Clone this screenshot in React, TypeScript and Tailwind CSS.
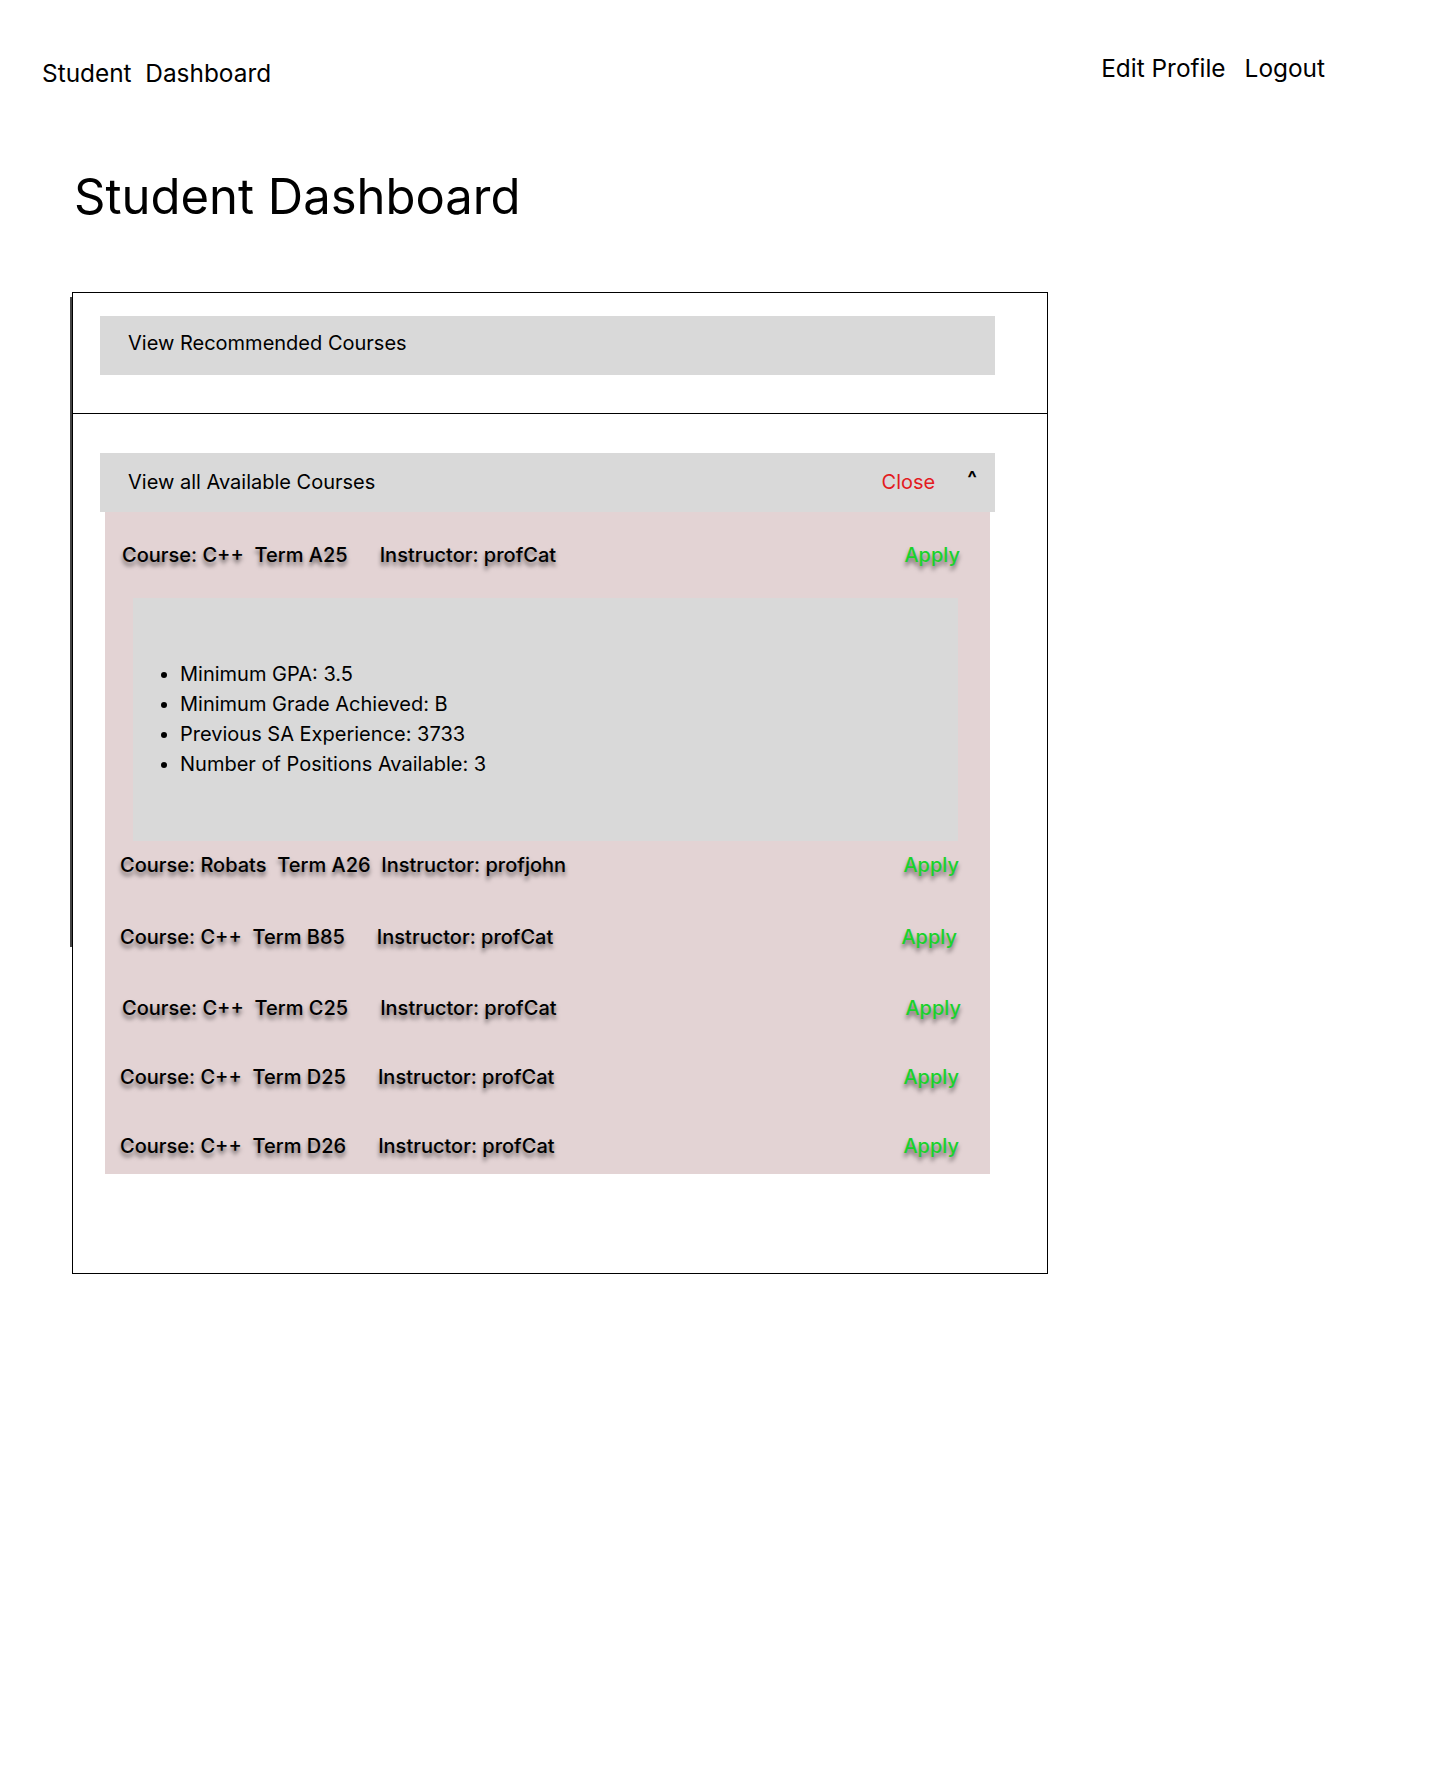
const details = [
  "Minimum GPA: 3.5",
  "Minimum Grade Achieved: B",
  "Previous SA Experience: 3733",
  "Number of Positions Available: 3",
]

const rows = [
  { text: "Course: Robats  Term A26  Instructor: profjohn", cls: "mt-[12px] pl-[15px] pr-[31px]" },
  { text: "Course: C++  Term B85      Instructor: profCat", cls: "mt-[48px] pl-[15px] pr-[33px]" },
  { text: "Course: C++  Term C25      Instructor: profCat", cls: "mt-[47px] pl-[17px] pr-[29px]" },
  { text: "Course: C++  Term D25      Instructor: profCat", cls: "mt-[45px] pl-[15px] pr-[31px]" },
  { text: "Course: C++  Term D26      Instructor: profCat", cls: "mt-[45px] pl-[15px] pr-[31px]" },
]

const shadow = "[text-shadow:0_4px_4px_rgba(0,0,0,0.55)]"

const CourseRow = ({ text, className }: { text: string; className?: string }) => {
  return (
    <div className={`flex items-center justify-between h-[24px] ${className ?? ""}`}>
      <span className={`whitespace-pre text-[20px] leading-[24px] font-medium text-black ${shadow}`}>{text}</span>
      <span className={`text-[20px] leading-[24px] font-medium text-[#19d22b] ${shadow}`}>Apply</span>
    </div>
  )
}

export default function App() {
  return (
    <div className="min-h-[1788px] w-[1440px] bg-white text-black font-['Inter','Noto_Sans',sans-serif]">
      <header className="flex justify-between pl-[42px] pr-[115px]">
        <span className="whitespace-pre pt-[59px] text-[24.4px] leading-[29px]">Student  Dashboard</span>
        <nav className="flex gap-[19px] pt-[54px] text-[24.4px] leading-[29px]">
          <a>Edit Profile</a>
          <a>Logout</a>
        </nav>
      </header>

      <main className="pl-[72px]">
        <h1 className="mt-[81px] pl-[2px] text-[49px] leading-[56px] font-normal">Student Dashboard</h1>

        <section className="relative mt-[67px] w-[976px] h-[982px] border-[1.5px] border-black">
          {/* sketchy double stroke on the left edge */}
          <div className="absolute -left-[3px] top-[4px] h-[650px] w-[1.5px] bg-[#444]" />

          <div className="border-b-[1.5px] border-black pt-[23px] pb-[38px] pl-[27px] pr-[52px]">
            <div className="flex items-center h-[59px] bg-[#d9d9d9] pl-[28px] pb-[5px] text-[20px]">
              View Recommended Courses
            </div>
          </div>

          <div className="pt-[39px] pl-[27px] pr-[52px]">
            <div className="flex items-center h-[59px] bg-[#d9d9d9] pl-[28px] pr-[18px] pb-[2px] text-[20px]">
              <span className="flex-1">View all Available Courses</span>
              <span className="text-[#e31b1f]">Close</span>
              <span className="ml-[32px] text-[20px] font-bold leading-none -mt-[8px]">^</span>
            </div>

            <div className="mx-[5px] bg-[#e3d3d4] pt-[31px] pb-[16px]">
              <CourseRow text="Course: C++  Term A25      Instructor: profCat" className="pl-[17px] pr-[30px]" />

              <div className="mt-[31px] ml-[28px] mr-[32px] h-[243px] bg-[#d9d9d9] pt-[61px] pl-[32px]">
                <ul className="list-disc pl-[15px] text-[20px] leading-[30px]">
                  {details.map((d) => (
                    <li key={d}>{d}</li>
                  ))}
                </ul>
              </div>

              {rows.map((r) => (
                <CourseRow key={r.text} text={r.text} className={r.cls} />
              ))}
            </div>
          </div>
        </section>
      </main>
    </div>
  )
}
